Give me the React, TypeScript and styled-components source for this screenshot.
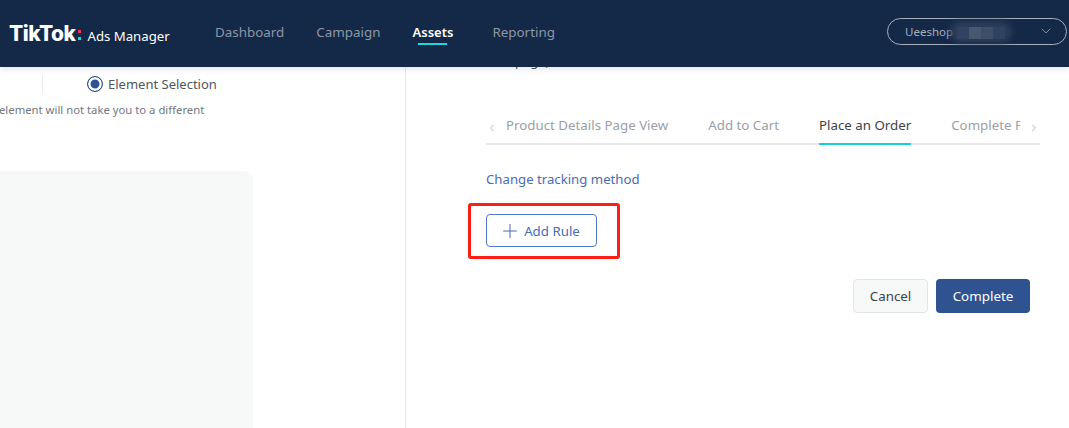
import React from "react";
import styled, { createGlobalStyle } from "styled-components";
import { ChevronDown, ChevronLeft, ChevronRight, Plus } from "lucide-react";

const GlobalStyle = createGlobalStyle`
  html, body {
    margin: 0;
    padding: 0;
    height: 428px;
    overflow: hidden;
    background: #fff;
    font-family: "Noto Sans", "Open Sans", sans-serif;
  }
`;

const NAV_ITEMS = ["Dashboard", "Campaign", "Assets", "Reporting"];
const TABS = ["Product Details Page View", "Add to Cart", "Place an Order", "Complete Payment"];

export default function App() {
  return (
    <Page>
      <GlobalStyle />
      <Header>
        <Logo>
          <LogoMark>TikTok</LogoMark>
          <LogoDots>
            <LogoDot $color="#f0355a" />
            <LogoDot $color="#1fd6dc" />
          </LogoDots>
          <LogoText>Ads Manager</LogoText>
        </Logo>
        <Nav>
          {NAV_ITEMS.map((item) => (
            <NavItem key={item} $active={item === "Assets"}>
              {item}
            </NavItem>
          ))}
        </Nav>
        <Account>
          <AccountName>Ueeshop</AccountName>
          <Smudge />
          <Mosaic />
          <ChevronDown size={16} strokeWidth={1.1} color="#a8b0bc" />
        </Account>
      </Header>
      <Body>
        <LeftPanel>
          <MethodRow>
            <MethodDivider />
            <Radio />
            <MethodLabel>Element Selection</MethodLabel>
          </MethodRow>
          <Hint>element will not take you to a different</Hint>
          <Preview />
        </LeftPanel>
        <RightPanel>
          <CutText>web page,</CutText>
          <Tabs>
            <TabArrow>
              <ChevronLeft size={22} strokeWidth={1.2} />
            </TabArrow>
            <TabList>
              {TABS.map((tab) => (
                <Tab key={tab} $active={tab === "Place an Order"}>
                  {tab}
                </Tab>
              ))}
            </TabList>
            <TabArrow>
              <ChevronRight size={22} strokeWidth={1.2} />
            </TabArrow>
          </Tabs>
          <ChangeLink>Change tracking method</ChangeLink>
          <RuleArea>
            <AddRule>
              <Plus size={22} strokeWidth={1.1} />
              Add Rule
            </AddRule>
            <Highlight />
          </RuleArea>
          <Actions>
            <CancelButton>Cancel</CancelButton>
            <CompleteButton>Complete</CompleteButton>
          </Actions>
        </RightPanel>
      </Body>
    </Page>
  );
}

const Page = styled.div`
  width: 1069px;
  height: 428px;
  display: flex;
  flex-direction: column;
  overflow: hidden;
`;

const Header = styled.header`
  position: relative;
  z-index: 2;
  flex: none;
  height: 67px;
  display: flex;
  align-items: center;
  padding: 0 2px 0 9px;
  box-sizing: border-box;
  background: #142847;
  box-shadow: 0 2px 6px rgba(20, 40, 71, 0.12);
`;

const Logo = styled.div`
  display: flex;
  align-items: center;
  width: 206px;
  flex: none;
`;

const LogoMark = styled.span`
  font-family: Inter, sans-serif;
  font-size: 21px;
  font-weight: 800;
  letter-spacing: -0.5px;
  color: #fff;
`;

const LogoDots = styled.span`
  display: flex;
  flex-direction: column;
  gap: 4px;
  margin: 3px 6px 0 3px;
`;

const LogoDot = styled.i<{ $color: string }>`
  display: block;
  width: 3px;
  height: 3px;
  background: ${(p) => p.$color};
`;

const LogoText = styled.span`
  font-size: 13.2px;
  color: #fff;
  margin-top: 4px;
`;

const Nav = styled.nav`
  display: flex;
  gap: 32px;
  flex: 1;
  height: 100%;
  align-items: center;
`;

const NavItem = styled.a<{ $active: boolean }>`
  position: relative;
  font-size: ${(p) => (p.$active ? "13px" : "13.4px")};
  font-weight: ${(p) => (p.$active ? 600 : 400)};
  color: ${(p) => (p.$active ? "#fff" : "#8d97a5")};
  margin-right: ${(p) => (p.$active ? "7px" : "0")};
  margin-top: -3px;

  &::after {
    content: "";
    display: ${(p) => (p.$active ? "block" : "none")};
    position: absolute;
    left: 5px;
    right: 6px;
    bottom: -4px;
    height: 2px;
    background: #1fd6dc;
  }
`;

const Account = styled.div`
  position: relative;
  width: 180px;
  height: 27px;
  box-sizing: border-box;
  margin-top: -5px;
  display: flex;
  align-items: center;
  justify-content: space-between;
  padding: 0 12px 0 17px;
  border: 1px solid #a8b0bc;
  border-radius: 14px;
`;

const AccountName = styled.span`
  font-size: 11.5px;
  color: #a8b0bc;
`;

const Smudge = styled.span`
  position: absolute;
  left: 62px;
  top: 2px;
  width: 62px;
  height: 22px;
  border-radius: 11px;
  background: #2a3d5a;
  filter: blur(3px);
`;

const Mosaic = styled.span`
  position: absolute;
  left: 69px;
  top: 8px;
  width: 48px;
  height: 12px;
  background: linear-gradient(
    90deg,
    #2f4260 0 25%,
    #46576f 25% 50%,
    #3c4e68 50% 75%,
    #2f4260 75% 100%
  );
`;

const Body = styled.main`
  flex: 1;
  display: flex;
  min-height: 0;
`;

const LeftPanel = styled.section`
  width: 406px;
  flex: none;
  box-sizing: border-box;
  border-right: 1px solid #e4e7ec;
  display: flex;
  flex-direction: column;
`;

const MethodRow = styled.div`
  height: 34px;
  display: flex;
  align-items: center;
`;

const MethodDivider = styled.span`
  width: 1px;
  height: 18px;
  margin: 0 44px 0 42px;
  background: #e8ebef;
`;

const Radio = styled.span`
  width: 16px;
  height: 16px;
  box-sizing: border-box;
  border: 1.5px solid #2f5291;
  border-radius: 50%;
  background: #2f5291;
  box-shadow: inset 0 0 0 2.5px #fff;
  margin-right: 5px;
`;

const MethodLabel = styled.span`
  font-size: 13px;
  color: #50565e;
`;

const Hint = styled.p`
  margin: 0 0 0 -1px;
  font-size: 11.3px;
  line-height: 18px;
  color: #73787f;
`;

const Preview = styled.div`
  flex: 1;
  width: 253px;
  margin-top: 52px;
  border-radius: 0 8px 0 0;
  background: #f7f8f8;
`;

const RightPanel = styled.section`
  flex: 1;
  min-width: 0;
  padding: 0 29px 0 80px;
  position: relative;
`;

const CutText = styled.div`
  height: 17px;
  margin-top: -15px;
  font-size: 13px;
  line-height: 18px;
  color: #4a5058;
`;

const Tabs = styled.div`
  display: flex;
  align-items: center;
  height: 43px;
  margin-top: 33px;
  box-shadow: inset 0 -2px 0 #e6e9ed;
  color: #80868e;
`;

const TabArrow = styled.span`
  flex: none;
  width: 12px;
  display: flex;
  justify-content: center;
  margin-top: 9px;
`;

const TabList = styled.div`
  flex: 1;
  min-width: 0;
  display: flex;
  gap: 40px;
  margin-right: 8px;
  padding-left: 8px;
  overflow: hidden;
  height: 43px;
`;

const Tab = styled.span<{ $active: boolean }>`
  flex: none;
  height: 43px;
  font-size: 13.3px;
  line-height: 46px;
  color: ${(p) => (p.$active ? "#3d4249" : "#9aa0a8")};
  box-shadow: ${(p) => (p.$active ? "inset 0 -2px 0 #17cfd6" : "none")};
`;

const ChangeLink = styled.a`
  display: block;
  margin-top: 24px;
  font-size: 13.2px;
  line-height: 20px;
  color: #4a6cb3;
`;

const RuleArea = styled.div`
  position: relative;
  margin-top: 25px;
  width: 111px;
`;

const AddRule = styled.button`
  width: 111px;
  height: 33px;
  display: flex;
  align-items: center;
  justify-content: center;
  gap: 3px;
  padding: 0 4px 0 0;
  background: #fff;
  border: 1px solid #4f79c7;
  border-radius: 4px;
  font-family: inherit;
  font-size: 13.3px;
  color: #4a6cb3;
`;

const Highlight = styled.span`
  position: absolute;
  left: -18px;
  top: -11px;
  width: 152px;
  height: 56px;
  box-sizing: border-box;
  border: 3px solid #fa1e14;
  border-radius: 3px;
`;

const Actions = styled.div`
  display: flex;
  justify-content: flex-end;
  gap: 8px;
  margin: 32px 10px 0 0;
`;

const CancelButton = styled.button`
  width: 75px;
  height: 34px;
  padding: 0;
  background: #f7f8f8;
  border: 1px solid #e2e4e6;
  border-radius: 4px;
  font-family: inherit;
  font-size: 13.3px;
  color: #3d4249;
`;

const CompleteButton = styled.button`
  width: 94px;
  height: 34px;
  padding: 0;
  background: #2f5291;
  border: 0;
  border-radius: 4px;
  font-family: inherit;
  font-size: 13.4px;
  color: #fff;
`;
